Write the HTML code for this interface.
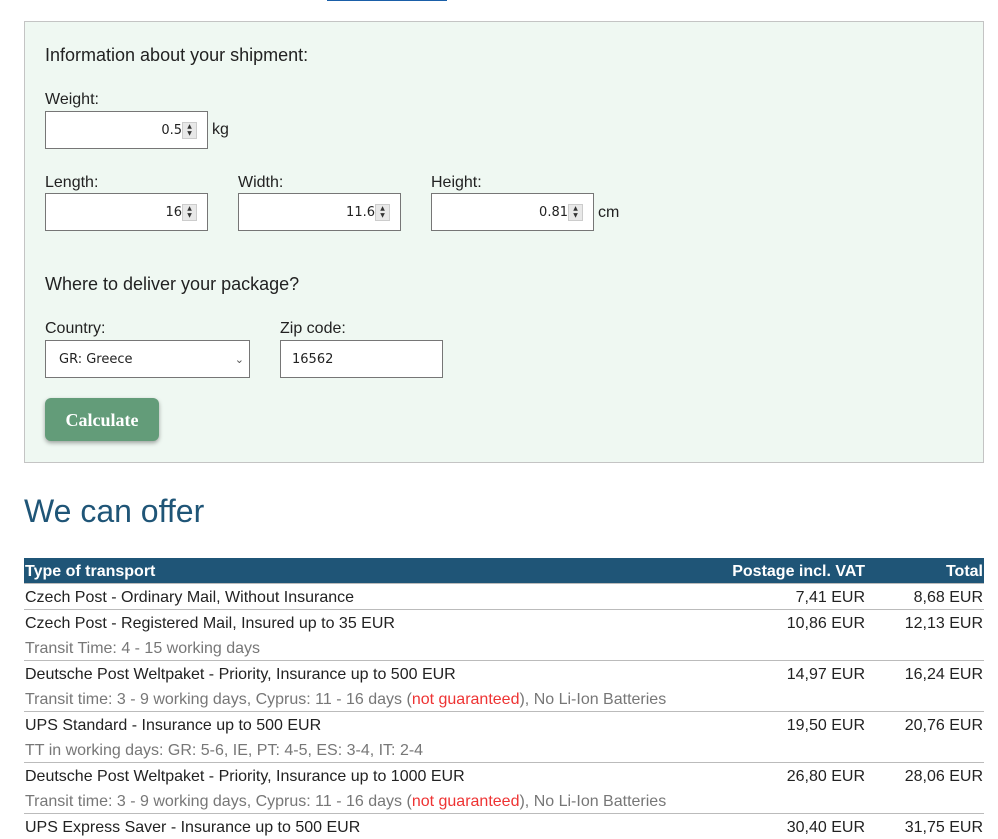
<!DOCTYPE html>
<html><head><meta charset="utf-8"><style>
*{margin:0;padding:0;box-sizing:border-box}
body{width:998px;height:822px;overflow:hidden;background:#fff;font-family:"Liberation Sans",Arial,sans-serif;color:#222;position:relative}
.a{position:absolute}
.panel{left:24px;top:21px;width:960px;height:442px;background:#eff8f2;border:1px solid #c4c4c4}
.lbl{font-size:16px;color:#222}
.inp{background:#fff;border:1px solid #767676;height:38px;font-size:13px;font-family:"DejaVu Sans",sans-serif}
.num{text-align:right;padding-right:25px;line-height:38px}
.sp{position:absolute;right:10px;top:10px;width:15px;height:17px;background:#e8e8e8;border:1px solid #ccc;font-size:6px;line-height:7px;text-align:center;color:#333}
.btn{left:45px;top:398px;width:114px;height:43px;background:#639c79;border-radius:6px;box-shadow:0 2px 4px rgba(0,0,0,.35);color:#fff;font-family:"Liberation Serif",serif;font-weight:bold;font-size:18px;text-align:center;line-height:45px}
table{position:absolute;left:24px;top:558px;width:960px;border-collapse:collapse;font-size:16px}
th{background:#1f5577;color:#fff;font-weight:bold;height:25px;padding:3px 1px 0;line-height:22px;text-align:left;border-bottom:1px solid #bbb}
td{padding:2px 1px 0;height:25px;vertical-align:top;line-height:23px;color:#222}
tr.b td{border-bottom:1px solid #bbb}
.r{text-align:right}
.g{color:#777}
.red{color:#e33}
</style></head><body>
<div class="a" style="left:327px;top:0;width:120px;height:1px;background:#1a5fa8"></div>
<div class="a panel"></div>
<div class="a" style="left:45px;top:45px;font-size:18px;color:#222">Information about your shipment:</div>
<div class="a lbl" style="left:45px;top:91px">Weight:</div>
<div class="a inp num" style="left:45px;top:111px;width:163px">0.5<div class="sp">▲<br>▼</div></div>
<div class="a lbl" style="left:212px;top:121px">kg</div>
<div class="a lbl" style="left:45px;top:174px">Length:</div>
<div class="a lbl" style="left:238px;top:174px">Width:</div>
<div class="a lbl" style="left:431px;top:174px">Height:</div>
<div class="a inp num" style="left:45px;top:193px;width:163px">16<div class="sp">▲<br>▼</div></div>
<div class="a inp num" style="left:238px;top:193px;width:163px">11.6<div class="sp">▲<br>▼</div></div>
<div class="a inp num" style="left:431px;top:193px;width:163px">0.81<div class="sp">▲<br>▼</div></div>
<div class="a lbl" style="left:598px;top:204px">cm</div>
<div class="a" style="left:45px;top:274px;font-size:18px;color:#222">Where to deliver your package?</div>
<div class="a lbl" style="left:45px;top:320px">Country:</div>
<div class="a lbl" style="left:280px;top:320px">Zip code:</div>
<div class="a inp" style="left:45px;top:340px;width:205px;line-height:38px;padding-left:13px">GR: Greece<span style="position:absolute;right:5px;top:0;font-size:11px;color:#555">&#8964;</span></div>
<div class="a inp" style="left:280px;top:340px;width:163px;line-height:38px;padding-left:11px">16562</div>
<div class="a btn">Calculate</div>
<div class="a" style="left:24px;top:493px;font-size:32px;color:#1f5577">We can offer</div>
<table>
<tr><th>Type of transport</th><th class="r" style="width:200px">Postage incl. VAT</th><th class="r" style="width:118px">Total</th></tr>
<tr class="b"><td>Czech Post - Ordinary Mail, Without Insurance</td><td class="r">7,41 EUR</td><td class="r">8,68 EUR</td></tr>
<tr><td>Czech Post - Registered Mail, Insured up to 35 EUR</td><td class="r">10,86 EUR</td><td class="r">12,13 EUR</td></tr>
<tr class="b"><td class="g" colspan="3">Transit Time: 4 - 15 working days</td></tr>
<tr><td>Deutsche Post Weltpaket - Priority, Insurance up to 500 EUR</td><td class="r">14,97 EUR</td><td class="r">16,24 EUR</td></tr>
<tr class="b"><td class="g" colspan="3">Transit time: 3 - 9 working days, Cyprus: 11 - 16 days (<span class="red">not guaranteed</span>), No Li-Ion Batteries</td></tr>
<tr><td>UPS Standard - Insurance up to 500 EUR</td><td class="r">19,50 EUR</td><td class="r">20,76 EUR</td></tr>
<tr class="b"><td class="g" colspan="3">TT in working days: GR: 5-6, IE, PT: 4-5, ES: 3-4, IT: 2-4</td></tr>
<tr><td>Deutsche Post Weltpaket - Priority, Insurance up to 1000 EUR</td><td class="r">26,80 EUR</td><td class="r">28,06 EUR</td></tr>
<tr class="b"><td class="g" colspan="3">Transit time: 3 - 9 working days, Cyprus: 11 - 16 days (<span class="red">not guaranteed</span>), No Li-Ion Batteries</td></tr>
<tr><td>UPS Express Saver - Insurance up to 500 EUR</td><td class="r">30,40 EUR</td><td class="r">31,75 EUR</td></tr>
</table>
</body></html>
